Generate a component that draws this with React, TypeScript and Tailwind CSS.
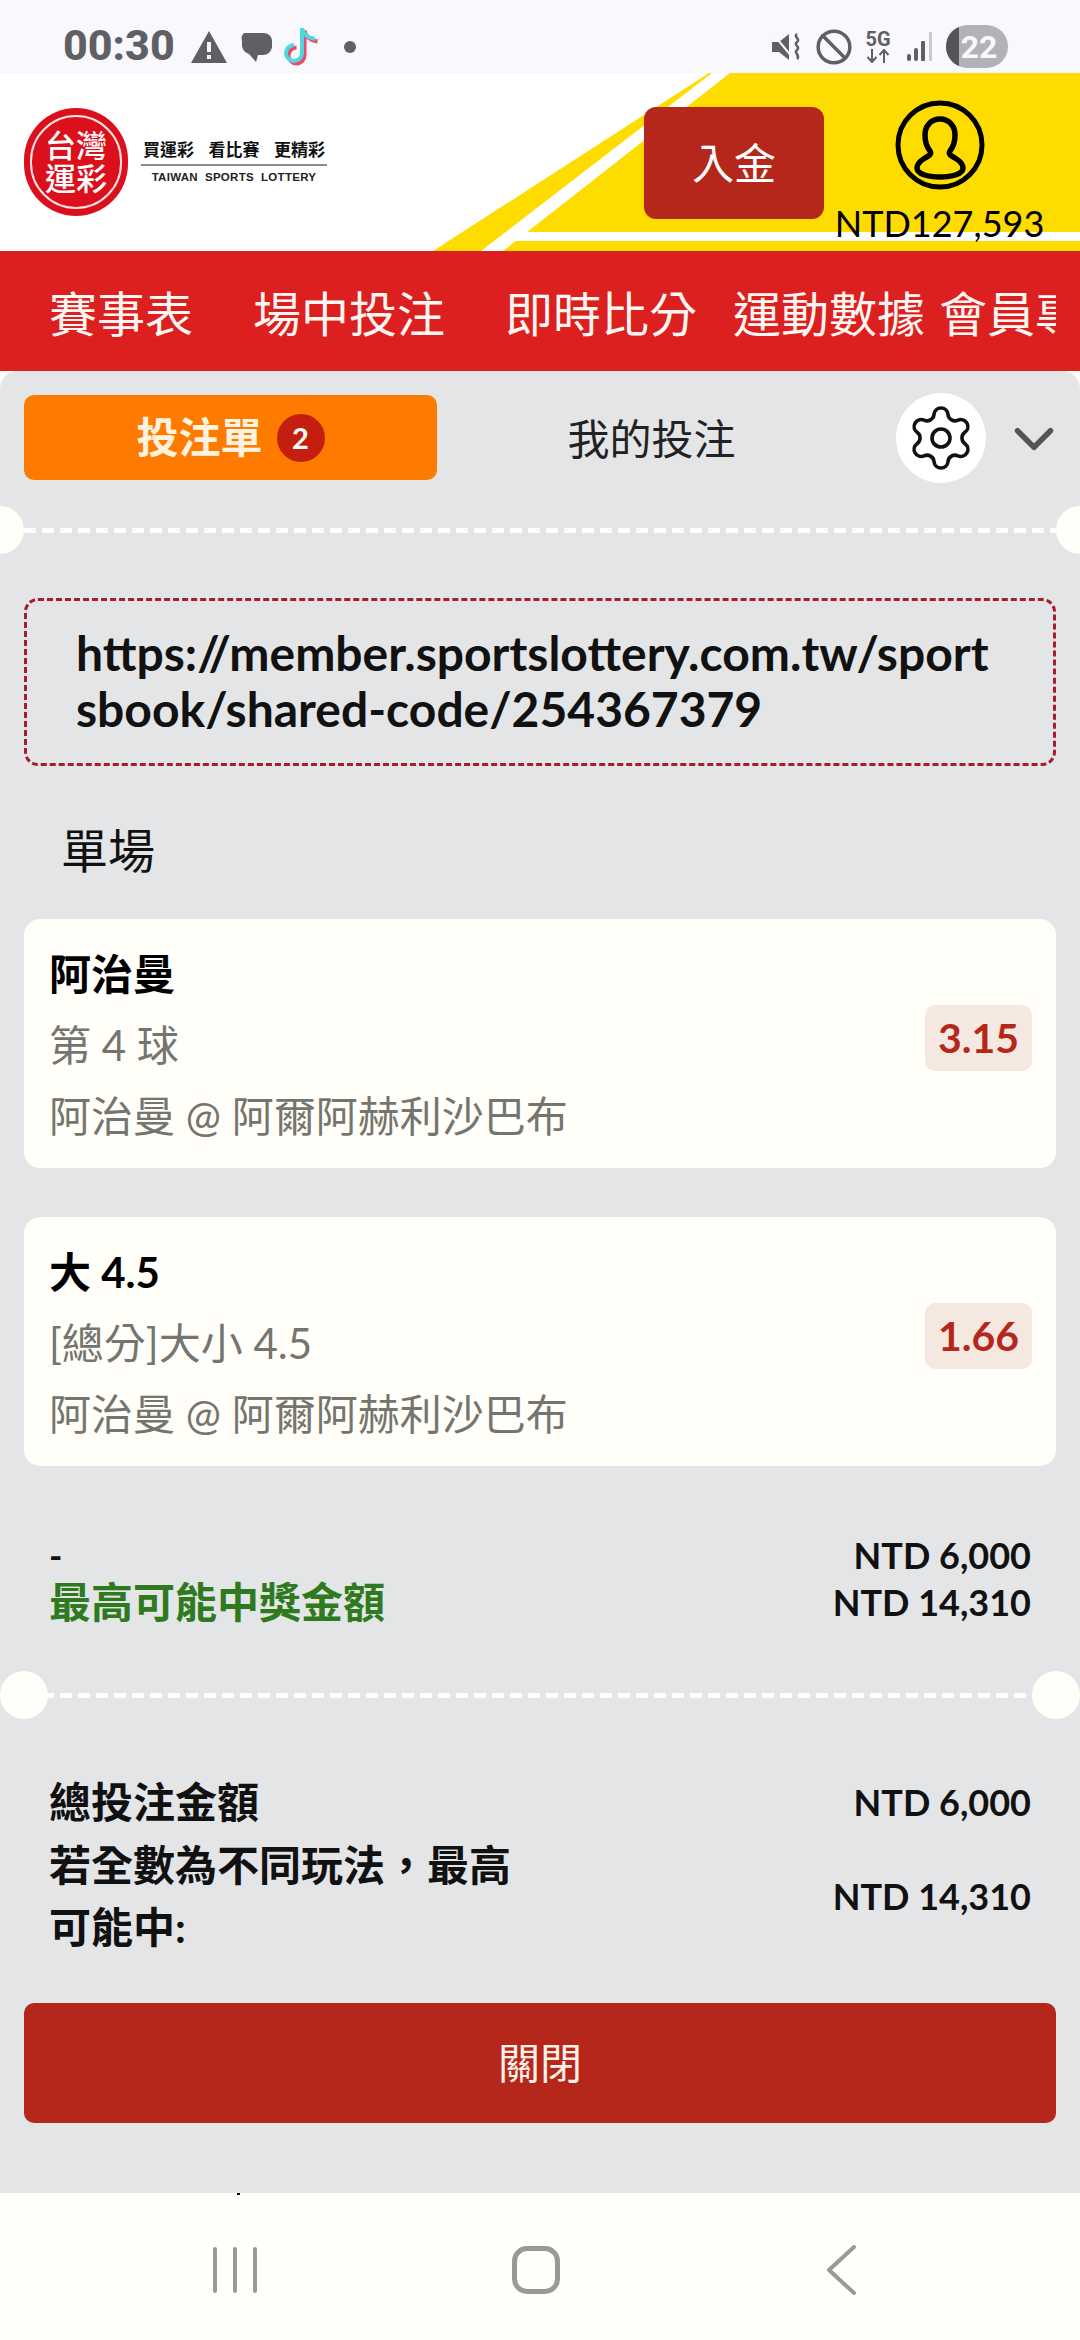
import React from "react";
import { Ban, ChevronDown, Settings } from "lucide-react";

// dashed separator with the ticket notches on both ends
function Divider({ inset }: { inset: boolean }) {
  return (
    <div className="relative h-[5px] mx-[24px] bg-[repeating-linear-gradient(90deg,#fffef8_0,#fffef8_12px,transparent_12px,transparent_18px)]">
      <div className={`absolute top-[-22px] h-[48px] w-[48px] rounded-full bg-[#fffef8] ${inset ? "left-[-24px]" : "left-[-48px]"}`} />
      <div className={`absolute top-[-22px] h-[48px] w-[48px] rounded-full bg-[#fffef8] ${inset ? "right-[-24px]" : "right-[-48px]"}`} />
    </div>
  );
}

function BetCard({ title, market, match, odds, mt }: { title: string; market: string; match: string; odds: string; mt: string }) {
  return (
    <div className={`mx-[24px] h-[249px] rounded-[16px] bg-[#fffef8] pl-[25px] pr-[24px] flex items-center justify-between ${mt}`}>
      <div className="flex flex-col gap-[21px] pt-[3px] text-[42px] leading-[50px] text-[#75756f]">
        <div className="font-bold text-black">{title}</div>
        <div>{market}</div>
        <div>{match}</div>
      </div>
      <div className="mb-[12px] flex h-[66px] w-[107px] items-center justify-center rounded-[10px] bg-[#f5e8e1] text-[41px] font-bold text-[#b5271a]">
        {odds}
      </div>
    </div>
  );
}

function StatusBar() {
  return (
    <div className="flex h-[73px] items-center bg-[#f8f8fd] pl-[63px] pr-[72px] pt-[20px] text-[#5f6065]">
      <span className="font-['Roboto',sans-serif] text-[43px] font-extrabold leading-none mt-[-2px]">00:30</span>
      <svg className="ml-[16px]" width="36" height="32" viewBox="0 0 36 32">
        <path d="M18 0 36 32H0Z" fill="#5f6065" />
        <path d="M16 11h4v10h-4zM16 24h4v4h-4z" fill="#f8f8fd" />
      </svg>
      <svg className="ml-[14px]" width="32" height="32" viewBox="0 0 32 32">
        <path d="M3 2h20a8 8 0 0 1 8 9v5a9 9 0 0 1-9 8h-5l-2 7-7-8a10 10 0 0 1-7-8v-5a8 8 0 0 1 2-8Z" fill="#5f6065" />
        <path d="M4 1.500h20" stroke="#f8f8fd" strokeWidth="1" />
      </svg>
      <svg className="ml-[10px]" width="36" height="42" viewBox="0 0 36 42" fill="none" strokeWidth="4">
        <path d="M20 3v25a8 8 0 1 1-8-8M20 3c1 6 6 10 13 11" stroke="#ec4a6c" transform="translate(1.500 1.500)" />
        <path d="M20 3v25a8 8 0 1 1-8-8M20 3c1 6 6 10 13 11" stroke="#4ed8df" transform="translate(-1 -1)" />
      </svg>
      <div className="ml-[25px] h-[12px] w-[12px] rounded-full bg-[#5f6065]" />
      <div className="flex-1" />
      <svg width="30" height="30" viewBox="0 0 30 30">
        <path d="M0 10h7l10-8v26L7 20H0Z" fill="#5f6065" />
        <path d="M1 2l20 24" stroke="#f8f8fd" strokeWidth="2" />
        <path d="M25 2c-4 3 4 5 0 8s4 5 0 8 4 5 0 9" stroke="#5f6065" strokeWidth="2.500" fill="none" />
      </svg>
      <Ban className="ml-[13px]" size={38} strokeWidth={2.2} color="#5f6065" />
      <div className="ml-[12px] flex w-[26px] flex-col items-center">
        <span className="font-['Roboto',sans-serif] text-[20px] font-bold leading-[19px]">5G</span>
        <svg width="24" height="14" viewBox="0 0 24 14" fill="none" stroke="#5f6065" strokeWidth="2">
          <path d="M6 0v12M1.500 8 6 13l4.500-5M18 14V2M13.500 6 18 1l4.500 5" />
        </svg>
      </div>
      <svg className="ml-[16px]" width="26" height="30" viewBox="0 0 26 30" fill="#5f6065">
        <rect x="0" y="22" width="4" height="7" rx="2" />
        <rect x="7" y="16" width="4" height="13" rx="2" />
        <rect x="14" y="9" width="4" height="20" rx="1" />
        <rect x="22" y="0" width="3" height="29" rx="1" fill="#c9c9cd" />
      </svg>
      <div className="relative ml-[13px] flex h-[43px] w-[62px] items-center justify-center overflow-hidden rounded-full bg-[#b2b2b7] font-['Roboto',sans-serif] text-[32px] font-bold leading-none text-[#f8f8fd]">
        <div className="absolute inset-y-0 left-0 w-[13px] bg-[#54555a]" />
        <span className="ml-[4px]">22</span>
      </div>
    </div>
  );
}

function LogoBadge() {
  return (
    <div className="flex h-[108px] w-[104px] items-center justify-center rounded-full bg-[#dc101c]">
      <div className="flex h-[94px] w-[92px] flex-col items-center justify-center rounded-full border-2 border-[#fbe3e3] text-[31px] font-medium leading-[33px] text-white">
        <span>台灣</span>
        <span>運彩</span>
      </div>
    </div>
  );
}

function Header() {
  return (
    <div className="relative flex h-[178px] items-center overflow-hidden bg-white pl-[24px]">
      {/* yellow court graphic */}
      <svg className="absolute inset-0" width="1080" height="178" viewBox="0 0 1080 178">
        <path d="M709 0H1080V178H433Z" fill="#ffdc00" />
        <path d="M712 0h18L503 178h-22Z" fill="#fff" />
        <path d="M523 159H1080V168H511Z" fill="#fff" />
      </svg>
      <div className="relative flex items-center">
        <LogoBadge />
        <div className="ml-[13px] flex w-[186px] flex-col items-center">
          <div className="flex w-full justify-between px-[2px] text-[17px] font-bold leading-[22px] text-[#111]">
            <span>買運彩</span>
            <span>看比賽</span>
            <span>更精彩</span>
          </div>
          <div className="my-[3px] h-[2px] w-full bg-[#8b8b8b]" />
          <div className="font-['Liberation_Sans',sans-serif] text-[11.500px] font-bold tracking-[0.3px] leading-[16px] text-[#222] whitespace-pre">TAIWAN  SPORTS  LOTTERY</div>
        </div>
      </div>
      <div className="relative ml-auto flex items-start self-start pr-[37px] pt-[27px]">
        <div className="mt-[7px] flex h-[112px] w-[180px] items-center justify-center rounded-[12px] bg-[#b5271a] text-[42px] text-white">
          入金
        </div>
        <div className="ml-[12px] flex w-[207px] flex-col items-center">
          <svg width="90" height="90" viewBox="0 0 90 90" fill="none" stroke="#000" strokeWidth="5">
            <circle cx="45" cy="45" r="42" />
            <path d="M45 19c-9 0-15 7-15 16 0 6 1 11 5 16 2 3-1 5-5 7-5 3-8 6-8 10 0 6 11 9 23 9s23-3 23-9c0-4-3-7-8-10-4-2-7-4-5-7 4-5 5-10 5-16 0-9-6-16-15-16Z" strokeWidth="5.500" />
          </svg>
          <div className="mt-[13px] text-[36px] leading-[40px] text-black whitespace-nowrap">NTD127,593</div>
        </div>
      </div>
    </div>
  );
}

function NavTabs() {
  return (
    <div className="bg-[#dc2020] pl-[49px] pr-[24px]">
      <div className="flex h-[120px] items-center overflow-hidden whitespace-nowrap pt-[5px] text-[48px] text-[#fdf6f2]">
        <span className="shrink-0">賽事表</span>
        <span className="ml-[60px] shrink-0">場中投注</span>
        <span className="ml-[60px] shrink-0">即時比分</span>
        <span className="ml-[36px] shrink-0">運動數據</span>
        <span className="ml-[14px] shrink-0">會員專區</span>
      </div>
    </div>
  );
}

function BottomNav() {
  return (
    <div className="relative flex h-[147px] items-center bg-[#fffef8] pb-[1px]">
      <div className="absolute left-[237px] top-[0px] h-[2px] w-[3px] bg-black" />
      <div className="ml-[213px] flex h-[46px] gap-[16px] mt-[8px]">
        <div className="w-[4px] rounded-full bg-[#9a9a94]" />
        <div className="w-[4px] rounded-full bg-[#9a9a94]" />
        <div className="w-[4px] rounded-full bg-[#9a9a94]" />
      </div>
      <div className="ml-[255px] mt-[8px] h-[48px] w-[48px] rounded-[15px] border-[5px] border-[#9a9a94]" />
      <svg className="ml-[265px] mt-[8px]" width="32" height="50" viewBox="0 0 32 50" fill="none" stroke="#9a9a94" strokeWidth="4" strokeLinecap="round" strokeLinejoin="round">
        <path d="M29 2 4 25l25 23" />
      </svg>
    </div>
  );
}

export default function App() {
  return (
    <div className="flex h-[2340px] w-[1080px] flex-col overflow-hidden bg-[#fffef8] font-['Lato','Noto_Sans_CJK_TC',sans-serif]">
      <StatusBar />
      <Header />
      <NavTabs />

      <main className="relative flex-1 overflow-hidden rounded-t-[18px] bg-[#e3e5e7]">
        {/* tabs */}
        <div className="flex h-[85px] items-center pl-[24px] mt-[24px]">
          <div className="flex h-[85px] w-[413px] items-center justify-center rounded-[10px] bg-[#ff7b00] text-[42px] font-bold text-[#fff3e0]">
            投注單
            <span className="ml-[14px] flex h-[48px] w-[48px] items-center justify-center rounded-full bg-[#c41e10] text-[29px] text-[#fffef8]">2</span>
          </div>
          <div className="w-[429px] text-center text-[42px] text-[#222] mt-[3px]">我的投注</div>
          <div className="ml-[30px] flex h-[90px] w-[90px] items-center justify-center rounded-full bg-white">
            <Settings size={72} strokeWidth={1.2} color="#111" />
          </div>
          <ChevronDown className="ml-[15px] mt-[3px]" size={66} strokeWidth={2} color="#555" />
        </div>

        <div className="mt-[48px]">
          <Divider inset={false} />
        </div>

        {/* share link */}
        <div className="mx-[24px] mt-[65px] h-[168px] rounded-[14px] border-[3px] border-dashed border-[#a81c2c] pl-[49px] pt-[24px] text-[48px] font-bold leading-[56px] text-[#111] [word-break:break-all]">
          https://member.sportslottery.com.tw/sport<br />sbook/shared-code/254367379
        </div>

        <div className="ml-[61px] mt-[54px] text-[47px] leading-[60px] text-[#111]">單場</div>

        <BetCard mt="mt-[39px]" title="阿治曼" market="第 4 球" match="阿治曼 @ 阿爾阿赫利沙巴布" odds="3.15" />
        <BetCard mt="mt-[49px]" title="大 4.5" market="[總分]大小 4.5" match="阿治曼 @ 阿爾阿赫利沙巴布" odds="1.66" />

        {/* summary */}
        <div className="mx-[49px] mt-[66px] grid grid-cols-[1fr_auto] text-[36px] font-bold leading-[47px] text-[#111]">
          <div>-</div>
          <div className="text-right">NTD 6,000</div>
          <div className="text-[42px] text-[#2f7a1f]">最高可能中獎金額</div>
          <div className="text-right">NTD 14,310</div>
        </div>

        <div className="mt-[67px]">
          <Divider inset={true} />
        </div>

        <div className="mx-[49px] mt-[77px] grid grid-cols-[1fr_auto] items-center gap-y-[5px] text-[36px] font-bold text-[#111]">
          <div className="text-[42px] leading-[50px]">總投注金額</div>
          <div className="text-right">NTD 6,000</div>
          <div className="w-[470px] text-[42px] leading-[62px]">若全數為不同玩法，最高可能中:</div>
          <div className="text-right">NTD 14,310</div>
        </div>

        <div className="mx-[24px] mt-[45px] flex h-[120px] items-center justify-center rounded-[10px] bg-[#b5271a] text-[42px] text-[#fdf0e8]">
          關閉
        </div>
      </main>

      <BottomNav />
    </div>
  );
}
